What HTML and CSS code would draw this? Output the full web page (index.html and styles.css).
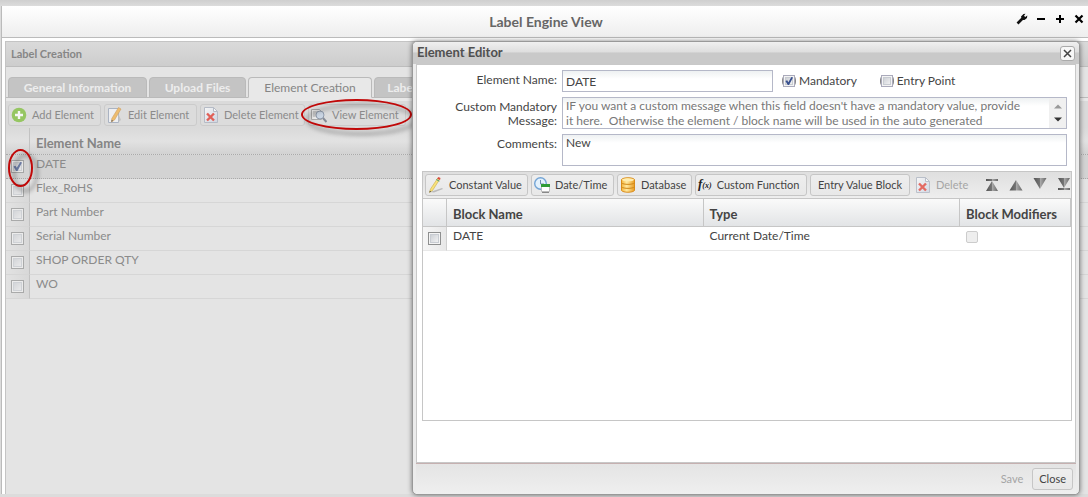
FILE: index.html
```html
<!DOCTYPE html>
<html lang="en">
<head>
<meta charset="utf-8">
<title>Label Engine View</title>
<link rel="stylesheet" href="styles.css">
</head>
<body>
<svg class="defs" aria-hidden="true">
  <defs>
    <linearGradient id="page" x1="0" y1="0" x2="1" y2="1"><stop offset="0" stop-color="#fff"/><stop offset="1" stop-color="#c9d2e2"/></linearGradient>
    <linearGradient id="gold" x1="0" y1="0" x2="1" y2="0"><stop offset="0" stop-color="#f6b63c"/><stop offset=".4" stop-color="#ffe9a0"/><stop offset="1" stop-color="#e99c22"/></linearGradient>
    <linearGradient id="steel" x1="0" y1="0" x2="1" y2="0"><stop offset="0" stop-color="#555"/><stop offset=".5" stop-color="#777"/><stop offset=".52" stop-color="#aaa"/><stop offset="1" stop-color="#666"/></linearGradient>
    <symbol id="i-delete" viewBox="0 0 16 16">
      <path d="M1.500 .5h9l4 4v11h-13z" fill="url(#page)" stroke="#a9b1bf"/>
      <path d="M10.500 .5v4h4z" fill="#fff" stroke="#a9b1bf"/>
      <path d="M4 6.500l7 7M11 6.500l-7 7" stroke="#e2372c" stroke-width="2.400"/>
    </symbol>
  </defs>
</svg>

<div class="window">
  <header class="window-head">
    <h1>Label Engine View</h1>
    <div class="window-tools">
      <button aria-label="Settings"><svg width="12" height="12" viewBox="0 0 12 12"><path d="M1.500 10.500L6.500 5.500" stroke="#111" stroke-width="2.600"/><path d="M6 7L5 3.500 7.500 1 9.500 .8 8 2.800 9.200 4 11.300 2.500 11 5 8.500 7z" fill="#111"/></svg></button>
      <button aria-label="Minimize"><svg width="12" height="12" viewBox="0 0 12 12"><path d="M2 6h8" stroke="#000" stroke-width="2"/></svg></button>
      <button aria-label="Maximize"><svg width="12" height="12" viewBox="0 0 12 12"><path d="M2 6h8M6 2v8" stroke="#000" stroke-width="2"/></svg></button>
      <button aria-label="Close window"><svg width="12" height="12" viewBox="0 0 12 12"><path d="M2.500 2.500l7 7M9.500 2.500l-7 7" stroke="#000" stroke-width="2.200"/></svg></button>
    </div>
  </header>

  <main class="panel">
    <h2 class="panel-head">Label Creation</h2>
    <nav class="tabs">
      <button class="tab tab-general">General Information</button>
      <button class="tab tab-upload">Upload Files</button>
      <button class="tab tab-creation active">Element Creation</button>
      <button class="tab tab-label">Label Creation</button>
    </nav>
    <div class="toolbar muted">
      <button class="btn b-93"><svg width="16" height="16" viewBox="0 0 16 16"><circle cx="8" cy="8" r="7.300" fill="#7fbf3a"/><path d="M8 4v8M4 8h8" stroke="#fff" stroke-width="2.400"/></svg>Add Element</button>
      <button class="btn b-93"><svg width="16" height="16" viewBox="0 0 16 16"><path d="M1.500 1.500h10v14h-10z" fill="#f4f6fa" stroke="#9aa6ba"/><path d="M11.500 7l2.500 6-2.500 2z" fill="#bbb"/><path d="M11.500 .5l2.500 1.500-6.500 11-3 2 .3-3.500z" fill="#f3b34c" stroke="#c98a3a" stroke-width=".6"/><path d="M4.600 12.800l-.2 2.200 1.800-1.200z" fill="#444"/></svg>Edit Element</button>
      <button class="btn b-105"><svg width="16" height="16"><use href="#i-delete"/></svg>Delete Element</button>
      <button class="btn b-98"><svg width="16" height="16" viewBox="0 0 16 16"><path d="M.5 2.500h8l2 2v8h-10z" fill="#eee" stroke="#999"/><path d="M2 5h6M2 7h3M2 9h3" stroke="#999"/><circle cx="9" cy="8" r="4" fill="#c4d3e6" stroke="#77869d"/><path d="M12 11l3.500 4" stroke="#6a7280" stroke-width="2"/></svg>View Element</button>
    </div>
    <table class="elements">
      <colgroup><col class="col-check"><col></colgroup>
      <thead><tr><th></th><th>Element Name</th></tr></thead>
      <tbody>
        <tr class="selected"><td><input type="checkbox" aria-label="DATE" checked></td><td>DATE</td></tr>
        <tr><td><input type="checkbox" aria-label="Flex_RoHS"></td><td>Flex_RoHS</td></tr>
        <tr><td><input type="checkbox" aria-label="Part Number"></td><td>Part Number</td></tr>
        <tr><td><input type="checkbox" aria-label="Serial Number"></td><td>Serial Number</td></tr>
        <tr><td><input type="checkbox" aria-label="SHOP ORDER QTY"></td><td>SHOP ORDER QTY</td></tr>
        <tr><td><input type="checkbox" aria-label="WO"></td><td>WO</td></tr>
      </tbody>
    </table>
  </main>
</div>

<div class="ring ring-row"></div>
<div class="ring ring-view"></div>

<section class="dialog" role="dialog" aria-labelledby="dlg-title">
  <header class="dialog-head">
    <h2 id="dlg-title">Element Editor</h2>
    <button class="dialog-x" aria-label="Close dialog"><svg width="9" height="9" viewBox="0 0 9 9"><path d="M1 1l7 7M8 1l-7 7" stroke="#444" stroke-width="1.500"/></svg></button>
  </header>
  <div class="dialog-body">
    <form class="fields">
      <label for="name">Element Name:</label>
      <div class="line">
        <input class="text" id="name" type="text" value="DATE">
        <label class="option"><span class="focus"><input type="checkbox" checked></span>Mandatory</label>
        <label class="option entry"><span class="focus"><input type="checkbox"></span>Entry Point</label>
      </div>
      <label for="msg">Custom Mandatory Message:</label>
      <div class="area">
        <textarea id="msg" class="hint">IF you want a custom message when this field doesn't have a mandatory value, provide
it here.  Otherwise the element / block name will be used in the auto generated</textarea>
        <div class="scroller"><svg width="8" height="5" viewBox="0 0 8 5"><path d="M0 4.500L4 .5l4 4z" fill="#999"/></svg><svg width="8" height="5" viewBox="0 0 8 5"><path d="M0 .5h8l-4 4z" fill="#333"/></svg></div>
      </div>
      <label for="comments">Comments:</label>
      <div class="area"><textarea id="comments">New</textarea></div>
    </form>

    <div class="grid">
      <div class="toolbar">
        <button class="btn b-103"><svg width="16" height="16" viewBox="0 0 16 16"><path d="M2 15L14 11l1 1-9 3.500z" fill="#bbb"/><path d="M9.500 1.500l2 1.200-7 10.800L1.500 15.500 2.500 12z" fill="#f8e27a" stroke="#c9ad4a" stroke-width=".6"/><path d="M9 1.500L10.500 0 12.500 1l-.5 2z" fill="#d94c3e"/><path d="M8.300 2.500l3 1.700" stroke="#4b9a70"/><path d="M1.500 15.500l.3-1.700 1.200.8z" fill="#333"/></svg>Constant Value</button>
        <button class="btn b-83"><svg width="16" height="16" viewBox="0 0 16 16"><circle cx="6.500" cy="6.500" r="5.800" fill="#e3f1fc" stroke="#73a4d5" stroke-width="1.400"/><path d="M6.500 3v4H10" fill="none" stroke="#718dad"/><path d="M7.500 7.500h8v7h-8z" fill="#fff" stroke="#bbb"/><path d="M7 7h9v3H7z" fill="#2e9b36"/><path d="M8 15.500h7" stroke="#888"/></svg>Date/Time</button>
        <button class="btn b-75"><svg width="16" height="16" viewBox="0 0 16 16"><path d="M1.500 2.500C3 .2 13 .2 14.500 2.500v11C13 15.800 3 15.800 1.500 13.500z" fill="url(#gold)" stroke="#d98c1a"/><path d="M1.500 6c2 1.800 11 1.800 13 0M1.500 10c2 1.800 11 1.800 13 0" fill="none" stroke="#cf8718"/><ellipse cx="8" cy="2.800" rx="6" ry="1.600" fill="#ffedb0"/></svg>Database</button>
        <button class="btn b-112"><i class="fx">f<small>(x)</small></i>Custom Function</button>
        <button class="btn b-100 center">Entry Value Block</button>
        <button class="btn plain b-57" disabled><svg width="16" height="16"><use href="#i-delete"/></svg>Delete</button>
        <div class="moves">
          <button aria-label="Move to top"><svg width="14" height="14" viewBox="0 0 14 14"><path d="M1 1h12v2H1zM7 3l6 10H1z" fill="url(#steel)"/></svg></button>
          <button aria-label="Move up"><svg width="14" height="14" viewBox="0 0 14 14"><path d="M7 2l6.500 10.500H.5z" fill="url(#steel)"/></svg></button>
          <button aria-label="Move down"><svg width="14" height="14" viewBox="0 0 14 14"><path d="M.5 0h13L7 11z" fill="url(#steel)"/></svg></button>
          <button aria-label="Move to bottom"><svg width="14" height="14" viewBox="0 0 14 14"><path d="M1 0h12L7 10zM1 10h12v2H1z" fill="url(#steel)"/></svg></button>
        </div>
      </div>
      <table class="blocks">
        <colgroup><col class="col-check"><col><col><col class="col-mod"></colgroup>
        <thead><tr><th></th><th>Block Name</th><th>Type</th><th>Block Modifiers</th></tr></thead>
        <tbody><tr><td><input type="checkbox" aria-label="Select DATE block"></td><td>DATE</td><td>Current Date/Time</td><td><input class="soft" type="checkbox" aria-label="Block modifiers" disabled></td></tr></tbody>
      </table>
    </div>
  </div>
  <footer class="dialog-foot">
    <button class="btn plain" disabled>Save</button>
    <button class="btn">Close</button>
  </footer>
</section>
</body>
</html>
```

FILE: styles.css
```css
* { box-sizing: border-box; }
body {
  margin: 0;
  min-height: 100vh;
  display: flex;
  flex-direction: column;
  position: relative;
  padding: 6px 0 3px 1px;
  background: linear-gradient(#cfcfcf, #dcdcdc 6px);
  color: #444;
  font: 12px/14px "Trebuchet MS", Lato, sans-serif;
}
button, input, textarea { font: inherit; color: inherit; margin: 0; }
button { border: 0; padding: 0; background: none; white-space: nowrap; }
svg { display: block; flex: none; }
h1, h2 { margin: 0; }
.defs { position: absolute; width: 0; height: 0; }

.window {
  flex: 1;
  display: flex;
  flex-direction: column;
  border-left: 1px solid #bbb;
  background: #fff;
}
.window-head {
  position: relative;
  height: 32px;
  display: flex;
  align-items: center;
  justify-content: center;
  padding-left: 2px;
  border-bottom: 1px solid #bbb;
  background: linear-gradient(#fff, #eee);
}
.window-head h1 { font-size: 14px; line-height: 18px; color: #666; }
.window-tools { position: absolute; right: 3px; top: 7px; display: flex; gap: 7px; }

.panel {
  flex: 1;
  margin: 3px 0 0 3px;
  border-left: 1px solid #c4c4c4;
  background: #e4e4e4;
  color: #8b8b8b;
}
.panel-head {
  height: 26px;
  padding: 4px 5px 0;
  font-size: 11px;
  line-height: 16px;
  color: #868686;
  border-top: 1px solid #c4c4c4;
  border-bottom: 1px solid #bdbdbd;
  background: linear-gradient(#dadada, #cdcdcd);
}
.tabs {
  display: flex;
  gap: 2px;
  padding: 10px 2px 0;
  border-bottom: 3px solid #e8e8e8;
  box-shadow: inset 0 -1px #bcbcbc, 0 1px #c9c9c9;
}
.tab {
  height: 21px;
  border: 1px solid #bababa;
  border-radius: 4px 4px 0 0;
  background: #c4c4c4;
  color: #ededed;
  font-weight: bold;
}
.tab.active { background: #e8e8e8; border-bottom-color: #e8e8e8; color: #858585; font-weight: normal; }
.tab-general { width: 139px; }
.tab-upload { width: 97px; }
.tab-creation { width: 124px; }
.tab-label { width: 104px; }

.toolbar { display: flex; align-items: center; gap: 3px; height: 27px; padding: 0 2px; }
.btn {
  flex: none;
  height: 22px;
  display: flex;
  align-items: center;
  gap: 5px;
  padding: 0 2px;
  border: 1px solid #c6c6c6;
  border-radius: 3px;
  background: linear-gradient(#eee, #e8e8e8);
  font-size: 11px;
}
.muted .btn { background: #dcdcdc; border-color: #cbcbcb; }
.muted { background: #dadada; }
.muted svg { opacity: .75; }
.plain { border-color: transparent; background: none; color: #a5a5a5; }
.plain svg { opacity: .7; }
.center { justify-content: center; }
.b-57 { width: 57px; }
.b-75 { width: 75px; }
.b-83 { width: 83px; }
.b-93 { width: 93px; }
.b-98 { width: 98px; }
.b-100 { width: 100px; }
.b-103 { width: 103px; }
.b-105 { width: 105px; }
.b-112 { width: 112px; }

table { width: 100%; table-layout: fixed; border-collapse: separate; border-spacing: 0; text-align: left; }
.col-check { width: 24px; }
.col-mod { width: 111px; }
th { font-size: 13px; line-height: 18px; padding: 3px 6px 0; }
td { height: 24px; padding: 1px 6px 0; vertical-align: top; line-height: 16px; border-bottom: 1px solid #d6d6d6; }
th:first-child, td:first-child { padding: 5px 0 0 5px; }
.elements th { height: 27px; color: #858585; background: linear-gradient(#dadada, #e2e2e2 50%, #d2d2d2); border-bottom: 1px dotted #aaa; }
.elements th:first-child, .elements td:first-child { border-right: 1px solid #c2c2c2; }
.elements td:first-child { background: linear-gradient(90deg, #e2e2e2, #d8d8d8); }
.elements .selected td { background: #d3d3d3; border-bottom: 1px dotted #aaa; }

input[type="checkbox"] {
  appearance: none;
  display: block;
  position: relative;
  width: 13px;
  height: 13px;
  border: 1px solid #8e8f8f;
  background: linear-gradient(135deg, #c4c8ce, #fafafa);
  box-shadow: inset 0 0 0 1px #f4f4f4, inset 0 0 0 2px #c8ccd2;
}
.elements input[type="checkbox"] { opacity: .65; }
input[type="checkbox"]:checked::before {
  content: "";
  position: absolute;
  inset: 1px;
  background: #38508f;
  clip-path: polygon(5% 50%, 28% 42%, 42% 65%, 80% 0, 100% 5%, 50% 100%, 35% 100%);
}
input[type="checkbox"].soft { width: 12px; height: 12px; margin-top: 3px; border-color: #ccc; border-radius: 2px; background: #eee; box-shadow: none; }

.ring {
  position: absolute;
  border: 2px solid #c00808;
  border-radius: 50%;
  filter: drop-shadow(5px 5px 2px rgba(0, 0, 0, .4));
}
.ring-row { left: 8px; top: 149px; width: 25px; height: 38px; }
.ring-view { left: 301px; top: 99px; width: 111px; height: 31px; }

.dialog {
  position: absolute;
  inset: 41px 8px 2px 412px;
  display: flex;
  flex-direction: column;
  padding: 0 3px;
  border: 1px solid #999;
  border-radius: 5px;
  background: #ececec;
  box-shadow: 0 0 5px rgba(0, 0, 0, .5);
}
.dialog-head {
  height: 22px;
  margin: 0 -3px;
  padding: 0 4px;
  display: flex;
  align-items: center;
  justify-content: space-between;
  border-radius: 4px 4px 0 0;
  background: linear-gradient(#f0f0f0, #dedede 45%, #c9c9c9 50%, #c9c9c9);
}
.dialog-head h2 { font-size: 13px; line-height: 20px; padding-bottom: 2px; color: #505050; }
.dialog-x {
  width: 15px;
  height: 15px;
  display: grid;
  place-items: center;
  border: 1px solid #aaa;
  border-radius: 3px;
  background: #f7f7f7;
}
.dialog-body {
  flex: 1;
  padding: 5px 3px 0 5px;
  display: flex;
  flex-direction: column;
  border: 1px solid #c8c8c8;
  background: #fff;
}
.fields {
  display: grid;
  grid-template-columns: 135px 1fr;
  gap: 5px 5px;
  margin-right: 5px;
}
.fields > label { padding-top: 3px; text-align: right; }
.line { display: flex; align-items: center; }
.text, textarea {
  border: 1px solid #b5b8c8;
  border-radius: 0;
  padding: 0 3px;
  background: linear-gradient(#eef1f2, #fff 8px);
  outline: 0;
}
.text { width: 211px; height: 22px; }
.option { display: flex; align-items: center; gap: 3px; margin-left: 9px; }
.entry { margin-left: 23px; }
.focus { border: 1px solid #888; border-color: transparent #888; border-radius: 6px; }
.focus input[type="checkbox"] { width: 12px; height: 12px; border-color: #aab; }
.area { position: relative; display: flex; }
textarea { flex: 1; height: 32px; resize: none; overflow: hidden; white-space: pre; line-height: 15px; }
.hint { color: #777; }
.scroller {
  position: absolute;
  inset: 1px 1px 1px auto;
  width: 17px;
  display: flex;
  flex-direction: column;
  align-items: center;
  justify-content: space-between;
  padding: 6px 0;
  background: #f0f0f0;
}

.grid { height: 250px; margin-top: 5px; border: 1px solid #c6c6c6; }
.grid .toolbar { background: linear-gradient(#dfdfdf, #eee); border-bottom: 1px solid #c6c6c6; }
.toolbar .plain { margin-left: -1px; }
.moves { display: flex; gap: 10px; margin-left: 13px; }
.fx { font: italic bold 13px/16px "Liberation Serif", serif; color: #222; }
.fx small { font-size: 8px; }
.blocks th { height: 28px; background: linear-gradient(#fafafa, #e2e4e6); border-right: 1px solid #c6c6c6; border-bottom: 1px solid #c6c6c6; }
.blocks td { border-bottom-color: #e8e8e8; }
.blocks td:first-child { background: linear-gradient(90deg, #f6f6f6, #e8e8e8); border-right: 1px solid #d0d0d0; }

.dialog-foot {
  height: 31px;
  display: flex;
  align-items: center;
  justify-content: flex-end;
  gap: 2px;
  padding-right: 3px;
  border-top: 1px solid #c5b0b0;
  background: linear-gradient(#e4e4e4, #efefef);
}
.dialog-foot .btn { padding: 0 6px; }
```
